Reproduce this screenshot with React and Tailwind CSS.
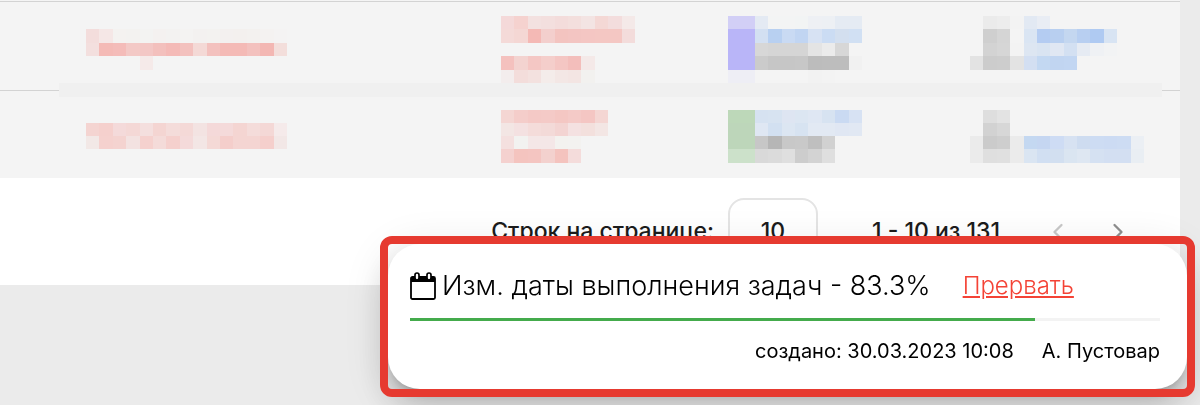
import { ChevronLeft, ChevronRight } from 'lucide-react';

// Hidden table values, one hex colour per block, '-' leaves the block empty
const ROWS = [
  {
    name: [
      '- - - - - - - - - - - - - - -',
      'f3dddc f5e7e6 f4f2f0 f3f2f0 f3f3f2 f4f1f0 f3f2f1 f4f3f2 f3f1f0 f3f2f0 f3f0ef f3f0ee f3f1ef f4f2f1 f4f3f3',
      'f3dfde f4bab6 f4bcb9 f3c9c6 f3c7c5 f3c0bd f4bab7 f3c1be f4d9d6 f3c1be f4bab6 f4bab6 f3c1be f3b7b3 f3dedb',
      '- - - - f5eae9 - - - - - - - - - -',
      '- - - - - - - - - - - - - - -'
    ],
    task: [
      'f4d9d9 f5d2cf f3e1e0 f3dfde f3dcdb f3dfdd f3e4e3 f4d8d5 f3dddd f4e9e8',
      'f4dad8 f4d7d4 f4b9b5 f3cfcd f3c4c0 f3c5c2 f4c6c3 f4c7c3 f4c7c3 f3dcdb',
      '- - - - - - - - - -',
      'f4c1be f3d3d0 f4c7c4 f4cecb f4c6c3 f3bebb f4e9e8 - - -',
      'f3eded f3dddb f3e1df f4ecea f3e7e5 f3e5e3 f2f1ef - - -'
    ],
    status: [
      'd2cff6 d2cff6 e4eaf3 f3f4f4 f3f4f4 f2f4f4 eef0f4 edf0f4 e5ebf3 e5ebf3',
      'b9b5f8 b9b5f8 d3e0f2 b8d0f1 c9daf3 c1d5f2 d7e2f3 cbdcf3 d3dfef d1e0f3',
      'b9b5f8 b9b5f8 d7d7d7 d5d5d5 d5d5d5 d5d5d5 e4e4e4 ebebeb d7d7d7 -',
      'b9b5f8 b9b5f8 cbcbcb c6c6c6 c6c6c6 c7c7c7 bcbcbc bdbdbd bdbdbd f1f1f1',
      'eeeef5 eeeef5 - - - - f2f2f2 f3f3f3 - -'
    ],
    person: [
      '- ebebeb ededed f3f3f3 e2e9f3 e9edf4 - - - - - - -',
      '- cfcfcf d5d5d5 - dae5f3 b4ccf2 b8cff0 c4d7f0 b8cff1 afcaf2 d8e4f3 - -',
      '- d3d3d3 d6d6d6 f3f3f3 dde6f2 d9e4f2 e0e7f3 d3e0f2 e6ebf3 eff1f4 f2f3f4 - -',
      'e3e3e3 cccccc cdcdcd e3e3e3 d3dff2 c3d8f2 c1d5f1 c2d6f2 - - - - -',
      '- - - - - - - - - - - - -'
    ]
  },
  {
    name: [
      '- - - - - - - - - - - - - - -',
      'f4d4d1 f5d0cd f4dada f4d8d6 f4dfde f4d5d2 f4dcda f4d9d7 f3e3e2 f4d9d9 f4dada f4d5d2 f4dcda f4d8d6 f5eaea',
      'f2e8e6 f5d1ce f4d3d0 f3e2e1 f5d1ce f4dbd9 f5d0cd f4dada f3e6e5 f4d9d6 f4cecb f4d5d2 f4d5d2 f5cfcc f2e7e6',
      '- - - - - - - - - - - - - - -'
    ],
    task: [
      'f4d6d3 f4cdca f4c9c6 f4cac7 f4c7c3 f4cac7 f4c6c3 f4d6d3 - -',
      'f3e6e4 f4e1e1 f4dcda f3dad8 f3d4d2 f4e1e1 f3e0dd f3e6e4 - -',
      'f4e0df f2f2f0 f4e7e7 f4e7e7 f3f2ef f3f2f0 - - - -',
      'f4d1cf f4c4bf f4c5c1 f3d1ce f4c3be f4dcdb - - - -'
    ],
    status: [
      'bdd8b9 bdd8b9 d6e2f1 d7e3f1 dee5f2 dce6f2 dfe7f3 d7e3f1 cadaf2 d7e2f3',
      'bdd6ba bdd6ba dfe7f3 d2e0f1 dce6f2 d7e3f1 e2e9f3 e2e9f3 e0e7f3 e1e8f3',
      'bdd6ba bdd6ba c7c7c7 b6b6b6 c8c8c8 c9c9c9 bfbfbf d1d1d1 - -',
      'cce1ca cce1ca d9d9d9 dbdbdb dfdfdf cdcdcd d3d3d3 dfdfdf - -'
    ],
    person: [
      '- dedede e3e3e3 - - - - - - - - - -',
      '- d2d2d2 d7d7d7 - - - - - - - - - -',
      'ebebeb cbcbcb cecece ebebeb c4d8f1 c5d6f1 cedcf4 d7e2f2 cedcf0 cddcf3 ccdbf3 cddcf3 ebeff4',
      'ebebeb dfdfdf e0e0e0 ebebeb dae5f2 d1dff2 d2dff0 dae5f1 dee7f2 d5e1f2 d3dff2 d3dff2 e9eef3'
    ]
  }
];

const MOSAIC_WIDTHS = {
  name: 'w-[201px] grid-cols-15',
  task: 'w-[134px] grid-cols-10',
  status: 'w-[134px] grid-cols-10',
  person: 'w-[174px] grid-cols-13'
};

function Mosaic({ field, rows }) {
  const blocks = rows.join(' ').split(' ');
  return (
    <div className={`grid ${rows.length === 5 ? 'h-[67px]' : 'h-[53px]'} auto-rows-fr ${MOSAIC_WIDTHS[field]}`}>
      {blocks.map((block, i) => (
        <span key={i} style={block === '-' ? undefined : { backgroundColor: `#${block}` }} />
      ))}
    </div>
  );
}

function CalendarIcon() {
  return (
    <svg viewBox="0 0 26 28" className="h-7 w-[26px] shrink-0" fill="none" aria-hidden="true">
      <rect x="1" y="5" width="24" height="22" rx="1.5" stroke="#000" strokeWidth="1.8" />
      <path d="M1 5h24v5H1z" fill="#000" />
      <rect x="5" y="1" width="4" height="7" rx="2" fill="#fff" stroke="#000" strokeWidth="1.7" />
      <rect x="17" y="1" width="4" height="7" rx="2" fill="#fff" stroke="#000" strokeWidth="1.7" />
    </svg>
  );
}

function TaskProgress({ title, percent, createdAt, author }) {
  return (
    <div className="fixed right-[13px] bottom-4 w-[799px] max-w-full">
      <section className="rounded-[32px] bg-white py-6 pr-[27px] pl-[22px] shadow-[0_8px_12px_-5px_rgba(0,0,0,0.25),0_20px_34px_2px_rgba(0,0,0,0.14),0_8px_40px_6px_rgba(0,0,0,0.1)]">
        <div className="flex items-center">
          <CalendarIcon />
          <h2 className="ml-1.5 text-[27px] leading-9 font-light whitespace-nowrap">
            {title} - {percent}%
          </h2>
          <a href="#cancel" className="ml-8 text-2xl leading-9 font-light text-[#f44336] underline">
            Прервать
          </a>
        </div>
        <div
          role="progressbar"
          aria-label={title}
          aria-valuenow={percent}
          className="mt-3.5 h-[3px] bg-[#f3f3f3]"
        >
          <div className="h-full bg-[#44ab4c]" style={{ width: `${percent}%` }} />
        </div>
        <div className="mt-4 flex justify-end gap-7 text-xl">
          <span>создано: {createdAt}</span>
          <span>{author}</span>
        </div>
      </section>
      {/* highlight frame sits above the card and its shadow */}
      <div className="pointer-events-none absolute -inset-2 rounded-xl border-8 border-[#e63a30]" />
    </div>
  );
}

export default function App() {
  return (
    <div className="min-h-screen bg-[#ebebeb] font-['Inter',sans-serif] text-black">
      <main className="mr-5 bg-white">
        <div className="relative">
          <table className="w-full table-fixed border-collapse bg-[#f4f4f4]">
            <colgroup>
              <col />
              <col className="w-[227px]" />
              <col className="w-[242px]" />
              <col className="w-[210px]" />
            </colgroup>
            <tbody>
              {ROWS.map((row, i) => (
                <tr key={i} className={i === 0 ? 'h-[90px] border-b border-[#d3d3d3]' : 'h-[88px]'}>
                  {Object.keys(MOSAIC_WIDTHS).map(field => (
                    <td
                      key={field}
                      className={`p-0 align-top ${i === 0 ? 'pt-4' : 'pt-[19px]'} ${field === 'name' ? 'pl-[86px]' : ''}`}
                    >
                      <Mosaic field={field} rows={row[field]} />
                    </td>
                  ))}
                </tr>
              ))}
            </tbody>
          </table>
          <div className="absolute inset-x-0 top-px h-px bg-[#d3d3d3]" />
          <div className="absolute top-[83px] right-[18px] left-[59px] h-[14px] bg-[#f0f0f0]" />
        </div>

        <div className="flex h-[107px] items-center justify-end pr-12 text-[23px] font-medium text-[#1c1c1c]">
          <label htmlFor="page-size">Строк на странице:</label>
          <select
            id="page-size"
            defaultValue="10"
            className="ml-3.5 h-[68px] w-[90px] appearance-none rounded-2xl border-2 border-[#e4e4e4] bg-white text-center"
          >
            <option>10</option>
            <option>25</option>
            <option>50</option>
          </select>
          <span className="ml-[54px]">1 - 10 из 131</span>
          <button type="button" aria-label="Предыдущая страница" className="ml-11 text-[#c8c8c8]">
            <ChevronLeft size={28} />
          </button>
          <button type="button" aria-label="Следующая страница" className="ml-8 text-[#8f8f8f]">
            <ChevronRight size={28} />
          </button>
        </div>
      </main>

      <TaskProgress
        title="Изм. даты выполнения задач"
        percent={83.3}
        createdAt="30.03.2023 10:08"
        author="А. Пустовар"
      />
    </div>
  );
}
